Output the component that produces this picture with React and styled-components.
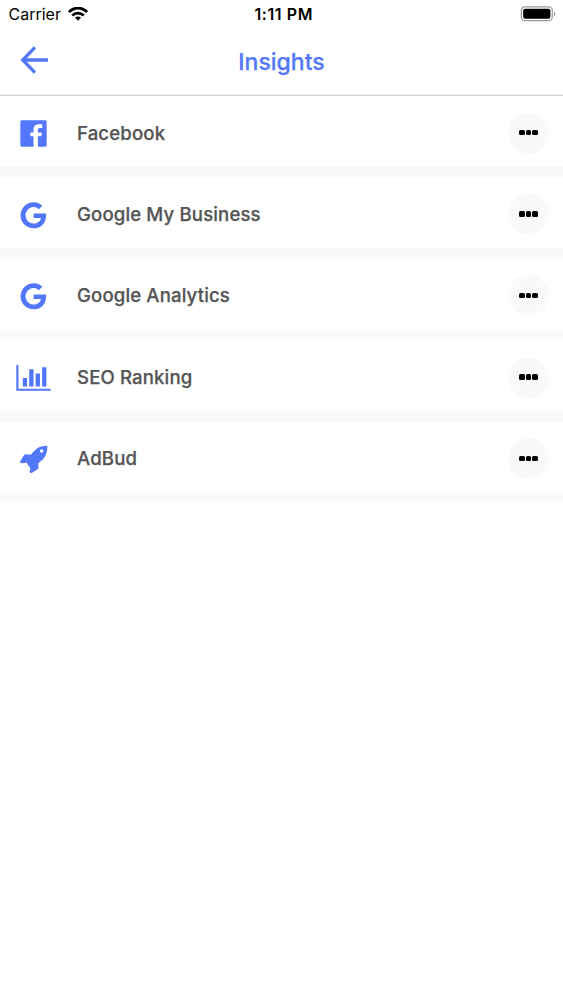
import React from "react";
import styled, { createGlobalStyle } from "styled-components";

const blue = "#5277fb";

const GlobalStyle = createGlobalStyle`
  * {
    box-sizing: border-box;
  }
  body {
    margin: 0;
    background: #fff;
    font-family: Inter, "Liberation Sans", sans-serif;
  }
`;

const FacebookIcon = () => (
  <svg width="27" height="27" viewBox="59 59 394 394" fill="currentColor">
    <path d="M426.8 64H85.2C73.5 64 64 73.5 64 85.2v341.6c0 11.7 9.5 21.2 21.2 21.2H256V296h-45.9v-56H256v-41.4c0-49.6 34.4-76.6 78.7-76.6 21.2 0 44 1.6 49.3 2.3v51.8h-35.3c-24.1 0-28.7 11.4-28.7 28.2V240h57.4l-7.5 56H320v152h106.8c11.7 0 21.2-9.5 21.2-21.2V85.2c0-11.7-9.5-21.2-21.2-21.2z" />
  </svg>
);

const GoogleIcon = () => (
  <svg width="27" height="27" viewBox="-35 73 1594 1594" fill="currentColor">
    <path d="M768 750h725q12 67 12 128 0 217-91 387.5t-259.5 266.5-386.5 96q-157 0-299-60.5t-245-163.5-163.5-245-60.5-299 60.5-299 163.5-245 245-163.5 299-60.5q300 0 515 201l-209 201q-123-119-306-119-129 0-238.5 65t-173.5 176.5-64 243.5 64 243.5 173.5 176.5 238.5 65q87 0 160-24t120-60 82-82 51.5-87 22.5-78h-436v-264z" />
  </svg>
);

const ChartIcon = () => (
  <svg width="35" height="26" viewBox="-18 0 2083 1547" fill="currentColor">
    <path d="M640 768v512H384V768h256zm384-512v1024H768V256h256zm1024 1152v128H0V0h128v1408h1920zm-640-896v768h-256V512h256zm384-384v1152h-256V128h256z" />
  </svg>
);

const RocketIcon = () => (
  <svg width="28" height="28" viewBox="0 -1 84 84" fill="currentColor">
    <path
      fillRule="evenodd"
      d="M78 1Q82 0 82 4C82 25 74 38 62 48L55 54V67Q55 71 51 73L36 82Q29 85 29 79L31 68L25 60Q22 55 20 52L5 54Q-2 54 1 48L10 32Q13 27 17 27L32 28L36 24C48 9 59 2 78 1ZM65 12a5 5 0 1 0 0 10a5 5 0 1 0 0-10Z"
    />
  </svg>
);

const items = [
  { name: "Facebook", icon: <FacebookIcon /> },
  { name: "Google My Business", icon: <GoogleIcon /> },
  { name: "Google Analytics", icon: <GoogleIcon /> },
  { name: "SEO Ranking", icon: <ChartIcon /> },
  { name: "AdBud", icon: <RocketIcon /> },
];

const App = () => {
  return (
    <>
      <GlobalStyle />
      <Screen>
        <StatusBar>
          <Carrier>
            <span>Carrier</span>
            <svg width="20" height="14" viewBox="0 0 20 14" fill="none" stroke="#000">
              <path d="M1 5.1C6-.3 14-.3 19 5.1" strokeWidth="2.9" />
              <path d="M4.2 8.5c3.4-3.3 8.2-3.3 11.6 0" strokeWidth="2.7" />
              <path d="M10 13.7l-3-3c1.7-1.6 4.3-1.6 6 0z" fill="#000" stroke="none" />
            </svg>
          </Carrier>
          <Time>1:11 PM</Time>
          <Battery>
            <svg width="36" height="16" viewBox="0 0 36 16">
              <rect x="1.3" y="0.9" width="31" height="13.8" rx="3.6" fill="none" stroke="#999" strokeWidth="1.2" />
              <rect x="3.2" y="2.8" width="27.2" height="10" rx="2" fill="#000" />
              <path d="M34 5.5c1.8.8 1.8 3.9 0 4.7z" fill="#999" />
            </svg>
          </Battery>
        </StatusBar>
        <Header>
          <BackButton aria-label="Back">
            <svg width="28" height="28" viewBox="0 0 28 28" fill="none" stroke="currentColor" strokeWidth="3.3">
              <path d="M15 1.3L2.7 14 15 26.7M2.4 14H28" />
            </svg>
          </BackButton>
          <Title>Insights</Title>
        </Header>
        <List>
          {items.map((item) => (
            <Row key={item.name}>
              <IconBox>{item.icon}</IconBox>
              <Label>{item.name}</Label>
              <MoreButton aria-label="More">
                <Dot />
                <Dot />
                <Dot />
              </MoreButton>
            </Row>
          ))}
        </List>
      </Screen>
    </>
  );
};

export default App;

const Screen = styled.div`
  width: 100%;
  height: 1000px;
  overflow: hidden;
  background: #fff;
`;
const StatusBar = styled.div`
  display: grid;
  grid-template-columns: 1fr auto 1fr;
  align-items: center;
  height: 28px;
  padding: 0 7px 0 8.5px;
  font-size: 16px;
  color: #000;
`;
const Carrier = styled.div`
  display: flex;
  align-items: center;
  gap: 7px;
  line-height: 28px;
`;
const Time = styled.div`
  padding-left: 3px;
  font-weight: 600;
  letter-spacing: 0.6px;
  line-height: 28px;
`;
const Battery = styled.div`
  display: flex;
  justify-content: flex-end;
`;
const Header = styled.header`
  display: grid;
  grid-template-columns: 1fr auto 1fr;
  align-items: center;
  height: 68px;
  padding: 0 20px;
  border-bottom: 1px solid #d4d4d4;
  box-shadow: inset 0 -1px #ececec;
  color: ${blue};
`;
const BackButton = styled.button`
  display: flex;
  width: 28px;
  height: 28px;
  margin-bottom: 3px;
  padding: 0;
  border: 0;
  background: none;
  color: inherit;
`;
const Title = styled.h1`
  margin: 0;
  font-size: 23px;
  font-weight: 500;
  line-height: 28px;
  -webkit-text-stroke: 0.25px ${blue};
`;
const List = styled.div`
  display: flex;
  flex-direction: column;
`;
const Row = styled.div`
  display: flex;
  align-items: center;
  height: 81.4px;
  padding: 4px 14px 0 16px;
  border-bottom: 11px solid #f9f9f9;
`;
const IconBox = styled.div`
  display: flex;
  justify-content: center;
  width: 35px;
  margin-top: 1px;
  margin-right: 26px;
  color: ${blue};
`;
const Label = styled.div`
  flex: 1;
  margin-top: -1px;
  color: #555;
  font-size: 18.6px;
  font-weight: 500;
  line-height: 24px;
  letter-spacing: 0.13px;
  -webkit-text-stroke: 0.25px #555;
`;
const MoreButton = styled.button`
  display: flex;
  align-items: center;
  justify-content: center;
  gap: 1px;
  width: 41px;
  height: 41px;
  padding: 0;
  border: 0;
  border-radius: 50%;
  background: #f9f9f9;
`;
const Dot = styled.span`
  width: 5.5px;
  height: 5.3px;
  margin-bottom: 1px;
  border-radius: 1.5px;
  background: #000;
`;
